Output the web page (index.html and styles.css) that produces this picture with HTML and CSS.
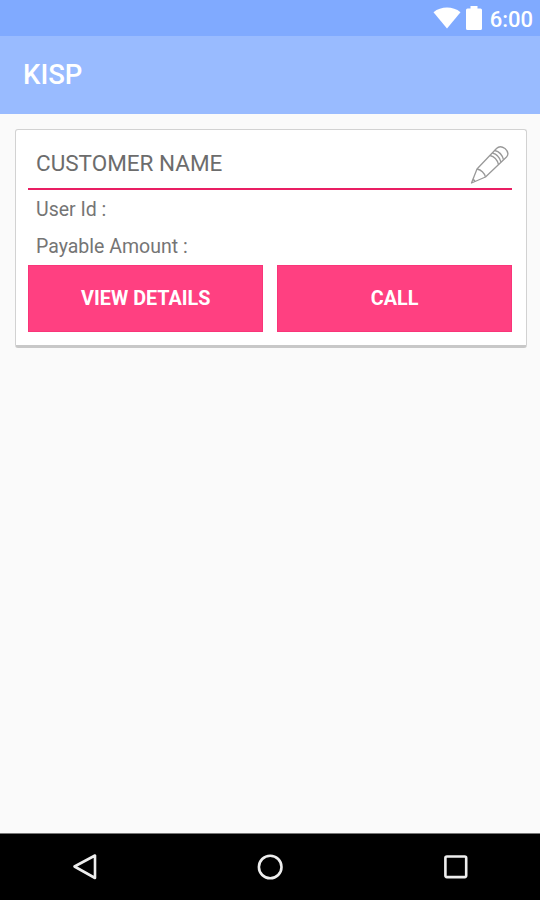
FILE: index.html
```
<!DOCTYPE html>
<html lang="en">
<head>
<meta charset="utf-8">
<title>KISP</title>
<link rel="stylesheet" href="styles.css">
</head>
<body>
<div class="screen">
  <div class="status-bar">
    <svg class="wifi" width="28" height="22" viewBox="0 0 28 22"><path d="M0.5 5.2C8-1 20-1 27.500 5.200L14 21.500Z"/></svg>
    <svg class="battery" width="16" height="24" viewBox="0 0 16 24"><path d="M1.500 2.500H4.500V0H11.500V2.500H14.500Q16 2.500 16 4V22.500Q16 24 14.500 24H1.500Q0 24 0 22.500V4Q0 2.500 1.500 2.500Z"/></svg>
    <span class="clock">6:00</span>
  </div>
  <header class="app-bar"><h1>KISP</h1></header>
  <main class="content">
    <article class="card">
      <div class="card-head">
        <h2>CUSTOMER NAME</h2>
        <svg class="pencil" width="40" height="40" viewBox="0 0 40 40">
          <path d="M1.500 38L7 24L26.500 3.500Q30 0 35 3.500Q40 8 36.500 12L15.500 32Z"/>
          <path d="M7 24Q13.500 25.500 15.500 32M2.800 34.500Q4.800 35 5 36.800"/>
          <path d="M20 10.500Q26.500 12 28.500 19.500M22.300 8Q29 9.500 31 17.200M24.800 5.500Q31.500 7 33.500 14.700"/>
        </svg>
      </div>
      <p class="field">User Id :</p>
      <p class="field">Payable Amount :</p>
      <div class="actions">
        <button type="button">VIEW DETAILS</button>
        <button type="button">CALL</button>
      </div>
    </article>
  </main>
  <nav class="nav-bar">
    <svg width="30" height="30" viewBox="0 0 30 30"><path d="M5.500 14.500L26 3.500V26Z"/></svg>
    <svg width="30" height="30" viewBox="0 0 30 30"><circle cx="15.200" cy="15" r="11.300"/></svg>
    <svg width="30" height="30" viewBox="0 0 30 30"><rect x="4.400" y="4.500" width="20.800" height="20.600" rx="1.500"/></svg>
  </nav>
</div>
</body>
</html>
```
FILE: styles.css
```
* { box-sizing: border-box; }
body { margin: 0; font-family: Roboto, "Liberation Sans", sans-serif; }
h1, h2, p { margin: 0; }
.screen { width: 540px; height: 900px; display: flex; flex-direction: column; background: #fafafa; }
.status-bar {
  height: 36px; padding: 6px 7px 0 0; background: #80aaff; color: #fff;
  display: flex; justify-content: flex-end; align-items: flex-start;
}
.status-bar svg { fill: #fff; }
.wifi { margin: 1px 5px 0 0; }
.battery { margin-right: 8px; }
.clock { font-size: 22px; line-height: 27px; font-weight: 500; }
.app-bar { height: 78px; padding: 0 23px; background: #99bbff; display: flex; align-items: center; }
.app-bar h1 { color: #fff; font-size: 27.500px; line-height: 32px; font-weight: 500; }
.content { flex: 1; padding: 15px 13px 0 15px; }
.card {
  height: 219px; padding: 0 14px 0 12.400px; background: #fff;
  border: 1.5px solid #d2d2d2; border-bottom: 3px solid #c8c8c8; border-radius: 3px;
}
.card-head {
  height: 60px; padding: 0 2px 0 7.600px; border-bottom: 2px solid #e91e63;
  display: flex; justify-content: space-between; align-items: center;
}
.card-head h2 { margin-top: 8px; color: #6c6c6c; font-size: 22.500px; line-height: 28px; font-weight: 400; }
.pencil { margin-top: 12px; fill: none; stroke: #999; stroke-width: 1.300; stroke-linejoin: round; }
.field { height: 37px; padding-left: 7.600px; color: #757575; font-size: 19.500px; line-height: 39px; }
.actions { margin-top: 1px; display: grid; grid-template-columns: 1fr 1fr; gap: 14px; }
.actions button {
  height: 67px; padding: 0 0 1px; border: 1px solid #f93579; background: #ff4081; color: #fff;
  font-family: inherit; font-size: 19.800px; font-weight: 700;
}
.nav-bar {
  height: 67px; padding: 0 69px; background: #000; border-top: 1px solid #777;
  display: flex; justify-content: space-between; align-items: center;
}
.nav-bar svg { fill: none; stroke: #eee; stroke-width: 2.600; stroke-linejoin: round; }
```
